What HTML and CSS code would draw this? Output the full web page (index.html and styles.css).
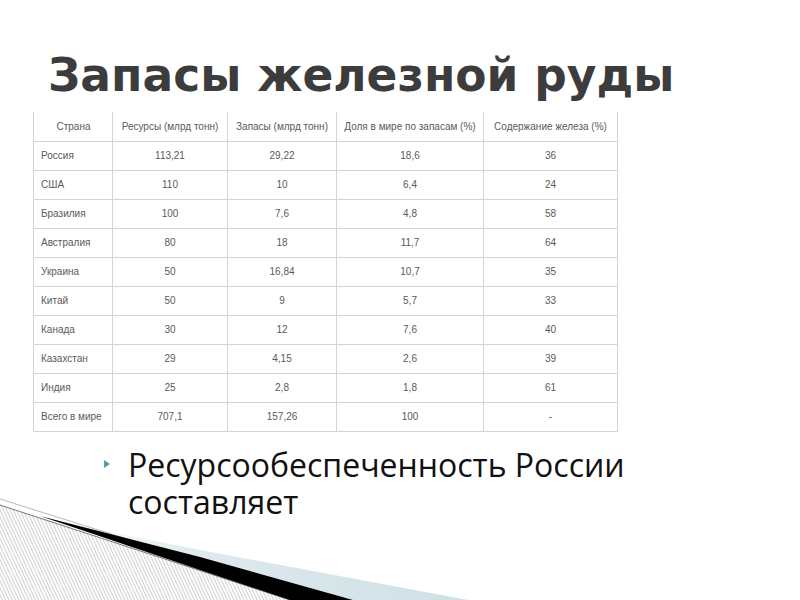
FILE: index.html
```html
<!DOCTYPE html>
<html lang="ru">
<head>
<meta charset="utf-8">
<title>Запасы железной руды</title>
<link rel="stylesheet" href="styles.css">
</head>
<body>
<div class="slide">
  <svg class="deco" viewBox="0 0 800 600" width="800" height="600" aria-hidden="true">
    <defs>
      <pattern id="hatch" patternUnits="userSpaceOnUse" width="3" height="3" patternTransform="rotate(-25)">
        <line x1="0.5" y1="0" x2="0.5" y2="3" stroke="#b0b0b0" stroke-width="0.6"/>
      </pattern>
      <linearGradient id="blue" x1="0" y1="0" x2="1" y2="0">
        <stop offset="0" stop-color="#ffffff"/>
        <stop offset="0.35" stop-color="#dde9ed"/>
        <stop offset="1" stop-color="#cfe0e6"/>
      </linearGradient>
    </defs>
    <polygon points="60,522 200,550 468,600 353,600" fill="url(#blue)"/>
    <polygon points="0,505 290,600 0,600" fill="url(#hatch)"/>
    <line x1="0" y1="499" x2="200" y2="562" stroke="#8a8a8a" stroke-width="0.6"/>
    <line x1="0" y1="505" x2="290" y2="600" stroke="#555" stroke-width="0.8"/>
    <polygon points="40,516 200,557 353,600 290,600 200,570" fill="#000"/>
  </svg>

  <h1 class="title">Запасы железной руды</h1>

  <table class="data">
    <tr class="head"><td>Страна</td><td>Ресурсы (млрд тонн)</td><td>Запасы (млрд тонн)</td><td>Доля в мире по запасам (%)</td><td>Содержание железа (%)</td></tr>
    <tr><td>Россия</td><td>113,21</td><td>29,22</td><td>18,6</td><td>36</td></tr>
    <tr><td>США</td><td>110</td><td>10</td><td>6,4</td><td>24</td></tr>
    <tr><td>Бразилия</td><td>100</td><td>7,6</td><td>4,8</td><td>58</td></tr>
    <tr><td>Австралия</td><td>80</td><td>18</td><td>11,7</td><td>64</td></tr>
    <tr><td>Украина</td><td>50</td><td>16,84</td><td>10,7</td><td>35</td></tr>
    <tr><td>Китай</td><td>50</td><td>9</td><td>5,7</td><td>33</td></tr>
    <tr><td>Канада</td><td>30</td><td>12</td><td>7,6</td><td>40</td></tr>
    <tr><td>Казахстан</td><td>29</td><td>4,15</td><td>2,6</td><td>39</td></tr>
    <tr><td>Индия</td><td>25</td><td>2,8</td><td>1,8</td><td>61</td></tr>
    <tr><td>Всего в мире</td><td>707,1</td><td>157,26</td><td>100</td><td>-</td></tr>
  </table>

  <ul class="bullets">
    <li>Ресурсообеспеченность России составляет</li>
  </ul>
</div>
</body>
</html>
```

FILE: styles.css
```css
* { box-sizing: border-box; }
html, body { margin: 0; padding: 0; background: #fff; }
.slide {
  position: relative;
  width: 800px;
  height: 600px;
  overflow: hidden;
  background: #fff;
}
.deco {
  position: absolute;
  left: 0;
  top: 0;
}
.title {
  position: relative;
  margin: 0;
  padding: 48px 0 0 48px;
  height: 112px;
  font-family: "DejaVu Sans", sans-serif;
  font-weight: bold;
  font-size: 45.5px;
  line-height: 56px;
  color: #3c3c3c;
}
.data {
  position: relative;
  margin-left: 33px;
  border-collapse: collapse;
  font-family: "Liberation Sans", Arial, sans-serif;
  font-size: 10px;
  color: #5a5a5a;
}
.data td {
  border: 1px solid #d4d4d4;
  height: 29px;
  padding: 0 6px;
  text-align: center;
  white-space: nowrap;
}
.data tr.head td { border-top: none; }
.data td:nth-child(1) { width: 79px; text-align: left; padding-left: 7px; }
.data td:nth-child(2) { width: 115px; }
.data td:nth-child(3) { width: 109px; }
.data td:nth-child(4) { width: 147px; }
.data td:nth-child(5) { width: 134px; }
.data tr.head td:nth-child(1) { text-align: center; }
.bullets {
  position: relative;
  list-style: none;
  margin: 14px 0 0 0;
  padding: 0 0 0 104px;
  width: 700px;
}
.bullets li {
  display: flex;
  gap: 18px;
  font-family: "Open Sans", sans-serif;
  font-size: 32px;
  line-height: 37px;
  color: #111;
}
.bullets li::before {
  content: "";
  flex: none;
  width: 0;
  height: 0;
  margin-top: 14px;
  border-top: 4px solid transparent;
  border-bottom: 4px solid transparent;
  border-left: 6px solid #4f9fae;
}
```
